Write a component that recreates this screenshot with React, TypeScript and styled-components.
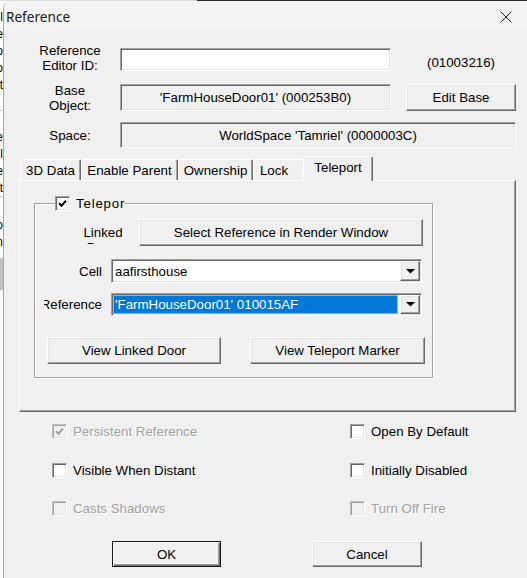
import React from 'react';
import styled, { createGlobalStyle, css } from 'styled-components';

const GlobalStyle = createGlobalStyle`
  html, body { margin: 0; padding: 0; width: 527px; height: 578px; overflow: hidden; background: #ffffff; }
  body { font-family: "Liberation Sans", Arial, sans-serif; font-size: 13.3px; color: #000; }
  * { box-sizing: border-box; }
`;

const Page = styled.div`
  width: 527px;
  height: 578px;
  display: flex;
  flex-direction: column;
  overflow: hidden;
`;

const TopEdge = styled.div`
  height: 1px;
  flex: none;
  background: linear-gradient(to right, #dcdcdc 0, #dcdcdc 197px, #2e2a27 197px, #2e2a27 100%);
`;

const Desktop = styled.div`
  flex: 1;
  display: flex;
  min-height: 0;
`;

const Strip = styled.div`
  width: 3px;
  flex: none;
  background: #f7f7f7;
  display: flex;
  flex-direction: column;
  overflow: hidden;
`;

const StripLine = styled.div<{ $h: number }>`
  height: ${p => p.$h}px;
  flex: none;
  display: flex;
  justify-content: flex-end;
  align-items: center;
  font-size: 12px;
  white-space: nowrap;
  background: #ffffff;
`;

const StripSep = styled.div`
  height: 1px;
  flex: none;
  background: #c8c8c8;
`;

const StripThumb = styled.div`
  height: 32px;
  flex: none;
  background: #c2c2c2;
`;

const Window = styled.div`
  flex: 1;
  min-width: 0;
  display: flex;
  flex-direction: column;
  background: #f0f0f0;
  border-left: 1px solid #a8a8a8;
  border-top-left-radius: 8px;
  overflow: hidden;
`;

const TitleBar = styled.div`
  height: 30px;
  flex: none;
  display: flex;
  align-items: center;
  justify-content: space-between;
  background: #f3f3f3;
  padding: 1px 15px 0 2px;
  font-family: "Noto Sans", "Open Sans", sans-serif;
  font-size: 13.6px;
  color: #1a1a1a;
`;

const Body = styled.div`
  flex: 1;
  display: flex;
  flex-direction: column;
  padding: 17px 0 0 16px;
`;

const FormRow = styled.div<{ $h: number; $mt?: number }>`
  display: grid;
  grid-template-columns: 100px 271px 15px 110px;
  grid-template-rows: ${p => p.$h}px;
  height: ${p => p.$h}px;
  margin-top: ${p => p.$mt ?? 0}px;
  flex: none;
`;

const FormLabel = styled.div<{ $lift?: number }>`
  grid-column: 1;
  display: flex;
  align-items: center;
  justify-content: center;
  text-align: center;
  line-height: 15px;
  min-height: 0;
  padding-bottom: ${p => p.$lift ?? 0}px;
`;

const sunken = css`
  border: 1px solid;
  border-color: #a0a0a0 #ffffff #ffffff #a0a0a0;
  box-shadow: inset 1px 1px #696969, inset -1px -1px #e3e3e3;
`;

const raised = css`
  border: 1px solid;
  border-color: #ffffff #696969 #696969 #ffffff;
  box-shadow: inset -1px -1px #a0a0a0, inset 1px 1px #e3e3e3;
`;

const Field = styled.div<{ $span?: boolean; $disabled?: boolean }>`
  grid-column: ${p => (p.$span ? '2 / 5' : '2')};
  ${sunken};
  background: ${p => (p.$disabled ? '#f0f0f0' : '#ffffff')};
  display: flex;
  align-items: center;
  justify-content: center;
  white-space: nowrap;
`;

const FormId = styled.div`
  grid-column: 4;
  display: flex;
  align-items: center;
  justify-content: center;
  padding-top: 5px;
`;

const Button = styled.button<{ $w: number; $h: number; $default?: boolean; $col?: number }>`
  width: ${p => p.$w}px;
  height: ${p => p.$h}px;
  flex: none;
  padding: 0;
  margin: 0;
  font: inherit;
  color: #000;
  background: #f0f0f0;
  cursor: default;
  ${raised};
  ${p => p.$col && css`grid-column: ${p.$col};`}
  ${p =>
    p.$default &&
    css`
      border-color: #1a1a1a;
      box-shadow: inset 1px 1px #ffffff, inset -1px -1px #696969, inset -2px -2px #a0a0a0;
    `}
`;

const TabStrip = styled.div`
  display: flex;
  align-items: flex-end;
  height: 24px;
  margin-top: 8px;
  flex: none;
`;

const Tab = styled.div<{ $w: number; $active?: boolean; $pr?: number }>`
  width: ${p => p.$w}px;
  height: 21px;
  flex: none;
  display: flex;
  align-items: center;
  justify-content: center;
  white-space: nowrap;
  padding-right: ${p => p.$pr ?? 0}px;
  background: #f0f0f0;
  border: 1px solid;
  border-bottom: none;
  border-color: #ffffff #696969 transparent #ffffff;
  box-shadow: inset -1px 0 #a0a0a0;
  border-radius: 2px 2px 0 0;
  ${p =>
    p.$active &&
    css`
      height: 25px;
      margin-bottom: -1px;
      margin-left: -2px;
      padding-bottom: 3px;
      position: relative;
      z-index: 1;
    `}
`;

const TabPanel = styled.div`
  margin-left: -1px;
  width: 497px;
  height: 232px;
  flex: none;
  border: 1px solid;
  border-color: #ffffff #696969 #696969 #ffffff;
  box-shadow: inset -1px -1px #a0a0a0;
  display: flex;
  flex-direction: column;
`;

const GroupBox = styled.div`
  position: relative;
  width: 399px;
  height: 175px;
  margin: 22px 0 0 14px;
  border: 1px solid #a0a0a0;
  box-shadow: inset 1px 1px #ffffff, 1px 1px #ffffff;
  display: flex;
  flex-direction: column;
  padding-top: 15px;
`;

const Legend = styled.div`
  position: absolute;
  top: -8px;
  left: 20px;
  width: 70px;
  height: 15px;
  background: #f0f0f0;
  display: flex;
  align-items: center;
  gap: 6px;
  overflow: hidden;
  white-space: nowrap;
`;

const LegendText = styled.span`
  letter-spacing: 0.8px;
`;

const Box = styled.span<{ $disabled?: boolean }>`
  width: 15px;
  height: 15px;
  flex: none;
  display: inline-flex;
  align-items: center;
  justify-content: center;
  ${sunken};
  background: #ffffff;
  ${p =>
    p.$disabled &&
    css`
      border-color: #c4c4c4 #ffffff #ffffff #c4c4c4;
      box-shadow: inset 1px 1px #a0a0a0, inset -1px -1px #e3e3e3;
      background: #f0f0f0;
    `}
`;

const LinkRow = styled.div`
  display: flex;
  height: 27px;
  padding-left: 40px;
  gap: 8px;
  flex: none;
`;

const LinkLabel = styled.div`
  width: 56px;
  height: 19px;
  margin-top: 6px;
  overflow: hidden;
  text-align: center;
  line-height: 15px;
`;

const ComboRow = styled.div<{ $h: number; $mt: number }>`
  display: flex;
  align-items: center;
  height: ${p => p.$h}px;
  margin-top: ${p => p.$mt}px;
  padding-left: 9px;
  gap: 8px;
  flex: none;
`;

const ComboLabel = styled.div`
  width: 59px;
  padding-right: 1px;
  display: flex;
  justify-content: flex-end;
  overflow: hidden;
  white-space: nowrap;
`;

const Combo = styled.div`
  width: 311px;
  height: 100%;
  display: flex;
  padding: 1px;
  ${sunken};
  background: #ffffff;
`;

const ComboText = styled.div<{ $selected?: boolean }>`
  flex: 1;
  position: relative;
  display: flex;
  align-items: center;
  padding-left: 2px;
  margin-right: 2px;
  white-space: nowrap;
  overflow: hidden;
  ${p =>
    p.$selected &&
    css`
      background: #0078d7;
      color: #ffffff;
      border: 1px solid #f7a23a;
      padding-left: 1px;
      &::after {
        content: '';
        position: absolute;
        inset: -1px;
        border: 1px dotted #111;
      }
    `}
`;

const DropButton = styled.div`
  width: 20px;
  flex: none;
  display: flex;
  align-items: center;
  justify-content: center;
  background: #f0f0f0;
  ${raised};
`;

const ButtonRow = styled.div<{ $mt: number; $pl: number; $gap: number }>`
  display: flex;
  margin-top: ${p => p.$mt}px;
  padding-left: ${p => p.$pl}px;
  gap: ${p => p.$gap}px;
  flex: none;
`;

const CheckGrid = styled.div`
  display: grid;
  grid-template-columns: 298px auto;
  grid-auto-rows: 15px;
  row-gap: 23.5px;
  margin: 12px 0 0 32px;
  flex: none;
`;

const CheckItem = styled.div<{ $disabled?: boolean }>`
  display: flex;
  align-items: center;
  gap: 6px;
  white-space: nowrap;
  color: ${p => (p.$disabled ? '#a0a0a0' : '#000')};
  ${p => p.$disabled && css`text-shadow: 1px 1px #ffffff;`}
`;

const CheckMark = ({ color = '#000' }: { color?: string }) => (
  <svg width="9" height="9" viewBox="0 0 9 9">
    <path d="M1 4.2 L3.5 6.7 L8 1.8" fill="none" stroke={color} strokeWidth="2" />
  </svg>
);

const Arrow = () => (
  <svg width="9" height="5" viewBox="0 0 9 5">
    <polygon points="0,0 9,0 4.5,4.5" fill="#000" />
  </svg>
);

const CloseIcon = () => (
  <svg width="12" height="12" viewBox="0 0 12 12">
    <path d="M0.5 0.5 L11.5 11.5 M11.5 0.5 L0.5 11.5" stroke="#1a1a1a" strokeWidth="1" fill="none" />
  </svg>
);

type CheckDef = { label: string; checked?: boolean; disabled?: boolean };

const checks: CheckDef[] = [
  { label: 'Persistent Reference', checked: true, disabled: true },
  { label: 'Open By Default' },
  { label: 'Visible When Distant' },
  { label: 'Initially Disabled' },
  { label: 'Casts Shadows', disabled: true },
  { label: 'Turn Off Fire', disabled: true },
];

const stripLines: { h: number; t: string }[] = [
  { h: 7, t: '' },
  { h: 17, t: 'l' },
  { h: 17, t: 'e' },
  { h: 17, t: 'o' },
  { h: 17, t: 'o' },
  { h: 17, t: 't' },
  { h: 17, t: '' },
];

const stripLines2: { h: number; t: string }[] = [
  { h: 17, t: '' },
  { h: 17, t: 'e' },
  { h: 17, t: 'l' },
  { h: 17, t: 'e' },
  { h: 17, t: 't' },
];

const stripLines3: { h: number; t: string }[] = [
  { h: 19, t: '' },
  { h: 17, t: 'o' },
  { h: 17, t: 'n' },
];

export default function App() {
  return (
    <>
      <GlobalStyle />
      <Page>
        <TopEdge />
        <Desktop>
          <Strip>
            {stripLines.map((l, i) => (
              <StripLine key={'a' + i} $h={l.h}>{l.t}</StripLine>
            ))}
            <StripSep />
            {stripLines2.map((l, i) => (
              <StripLine key={'b' + i} $h={l.h}>{l.t}</StripLine>
            ))}
            <StripSep />
            {stripLines3.map((l, i) => (
              <StripLine key={'c' + i} $h={l.h}>{l.t}</StripLine>
            ))}
            <StripLine $h={8}>{''}</StripLine>
            <StripThumb />
          </Strip>
          <Window>
            <TitleBar>
              <span>Reference</span>
              <CloseIcon />
            </TitleBar>
            <Body>
              <FormRow $h={23}>
                <FormLabel $lift={3}>
                  Reference
                  <br />
                  Editor ID:
                </FormLabel>
                <Field />
                <FormId>(01003216)</FormId>
              </FormRow>
              <FormRow $h={27} $mt={13}>
                <FormLabel>
                  Base
                  <br />
                  Object:
                </FormLabel>
                <Field $disabled>'FarmHouseDoor01' (000253B0)</Field>
                <Button $w={110} $h={27} $col={4}>Edit Base</Button>
              </FormRow>
              <FormRow $h={26} $mt={11}>
                <FormLabel>Space:</FormLabel>
                <Field $disabled $span>WorldSpace 'Tamriel' (0000003C)</Field>
              </FormRow>

              <TabStrip>
                <Tab $w={61}>3D Data</Tab>
                <Tab $w={97}>Enable Parent</Tab>
                <Tab $w={75}>Ownership</Tab>
                <Tab $w={52} $pr={10}>Lock</Tab>
                <Tab $w={70} $active>Teleport</Tab>
              </TabStrip>
              <TabPanel>
                <GroupBox>
                  <Legend>
                    <Box>
                      <CheckMark />
                    </Box>
                    <LegendText>Teleport</LegendText>
                  </Legend>
                  <LinkRow>
                    <LinkLabel>
                      Linked
                      <br />
                      Door:
                    </LinkLabel>
                    <Button $w={284} $h={27}>Select Reference in Render Window</Button>
                  </LinkRow>
                  <ComboRow $h={24} $mt={13}>
                    <ComboLabel>Cell</ComboLabel>
                    <Combo>
                      <ComboText>aafirsthouse</ComboText>
                      <DropButton>
                        <Arrow />
                      </DropButton>
                    </Combo>
                  </ComboRow>
                  <ComboRow $h={23} $mt={10}>
                    <ComboLabel>Reference</ComboLabel>
                    <Combo>
                      <ComboText $selected>'FarmHouseDoor01' 010015AF</ComboText>
                      <DropButton>
                        <Arrow />
                      </DropButton>
                    </Combo>
                  </ComboRow>
                  <ButtonRow $mt={21} $pl={12} $gap={29}>
                    <Button $w={174} $h={27}>View Linked Door</Button>
                    <Button $w={175} $h={27}>View Teleport Marker</Button>
                  </ButtonRow>
                </GroupBox>
              </TabPanel>

              <CheckGrid>
                {checks.map(c => (
                  <CheckItem key={c.label} $disabled={c.disabled}>
                    <Box $disabled={c.disabled}>
                      {c.checked && <CheckMark color={c.disabled ? '#a0a0a0' : '#000'} />}
                    </Box>
                    <span>{c.label}</span>
                  </CheckItem>
                ))}
              </CheckGrid>

              <ButtonRow $mt={25} $pl={92} $gap={91}>
                <Button $w={109} $h={26} $default>OK</Button>
                <Button $w={110} $h={26}>Cancel</Button>
              </ButtonRow>
            </Body>
          </Window>
        </Desktop>
      </Page>
    </>
  );
}
